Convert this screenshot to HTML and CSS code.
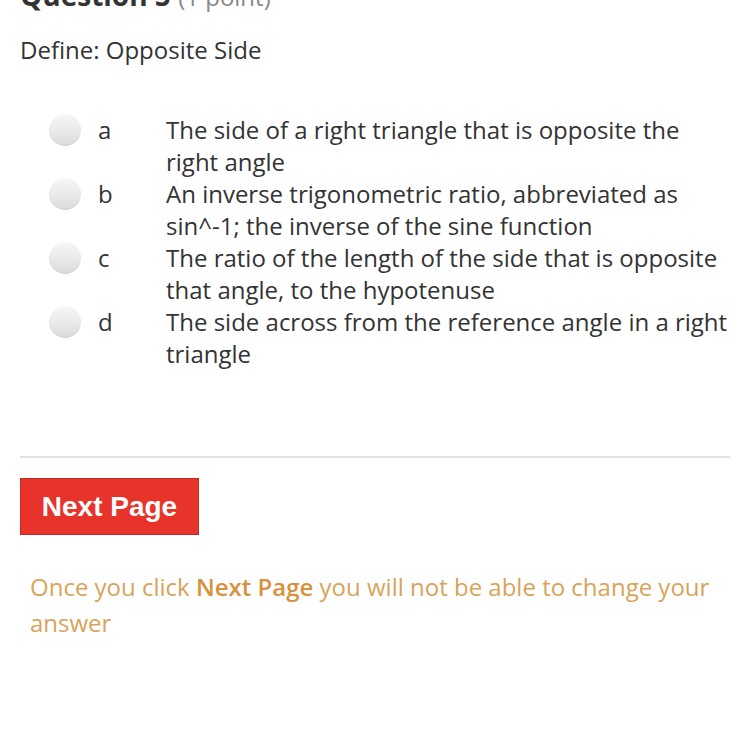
FILE: index.html
```html
<!DOCTYPE html>
<html>
<head>
<meta charset="utf-8">
<link rel="stylesheet" href="styles.css">
</head>
<body>
<div class="page">
  <h2 class="qtitle">Question 5 <span class="pts">(1 point)</span></h2>
  <p class="prompt">Define: Opposite Side</p>
  <div class="options">
    <div class="opt"><span class="radio"></span><span class="letter">a</span><span class="text">The side of a right triangle that is opposite the right angle</span></div>
    <div class="opt"><span class="radio"></span><span class="letter">b</span><span class="text">An inverse trigonometric ratio, abbreviated as sin^-1; the inverse of the sine function</span></div>
    <div class="opt"><span class="radio"></span><span class="letter">c</span><span class="text">The ratio of the length of the side that is opposite that angle, to the hypotenuse</span></div>
    <div class="opt"><span class="radio"></span><span class="letter">d</span><span class="text">The side across from the reference angle in a right triangle</span></div>
  </div>
  <hr class="divider">
  <button class="next">Next Page</button>
  <p class="warn">Once you click <b>Next Page</b> you will not be able to change your answer</p>
</div>
</body>
</html>
```
FILE: styles.css
```css
html, body { margin: 0; padding: 0; background: #fff; }
.page {
  padding: 0 20px;
  font-family: "Open Sans", sans-serif;
  color: #333;
}
.qtitle {
  margin: -20px 0 0;
  font-size: 28px;
  font-weight: 700;
  line-height: 30px;
  color: #333;
}
.pts { font-weight: 400; color: #888; font-size: 24px; }
.prompt {
  margin: 22px 0 0;
  font-size: 24px;
  line-height: 32px;
}
.options {
  margin-top: 48px;
  display: flex;
  flex-direction: column;
}
.opt {
  display: grid;
  grid-template-columns: 29px 32px 17px 68px 1fr;
  font-size: 24px;
  line-height: 32px;
}
.radio {
  grid-column: 2;
  width: 32px;
  height: 32px;
  border-radius: 50%;
  background: linear-gradient(#f7f7f7, #dcdcdc);
  box-shadow: inset 0 -1px 2px rgba(0,0,0,0.05);
}
.letter { grid-column: 4; color: #333; }
.text { grid-column: 5; color: #333; }
.divider {
  margin: 86px 0 0;
  border: 0;
  border-top: 2px solid #e3e3e3;
}
.next {
  margin-top: 20px;
  display: block;
  width: 179px;
  height: 57px;
  background: #e8332a;
  border: 1px solid #c62a22;
  color: #fff;
  font-family: "Liberation Sans", Arial, sans-serif;
  font-weight: 700;
  font-size: 28px;
  padding: 0;
}
.warn {
  margin: 34px 0 0;
  padding-left: 10px;
  font-size: 24px;
  line-height: 36px;
  color: #d9a35a;
}
.warn b { font-weight: 600; color: #d8913f; }
```
